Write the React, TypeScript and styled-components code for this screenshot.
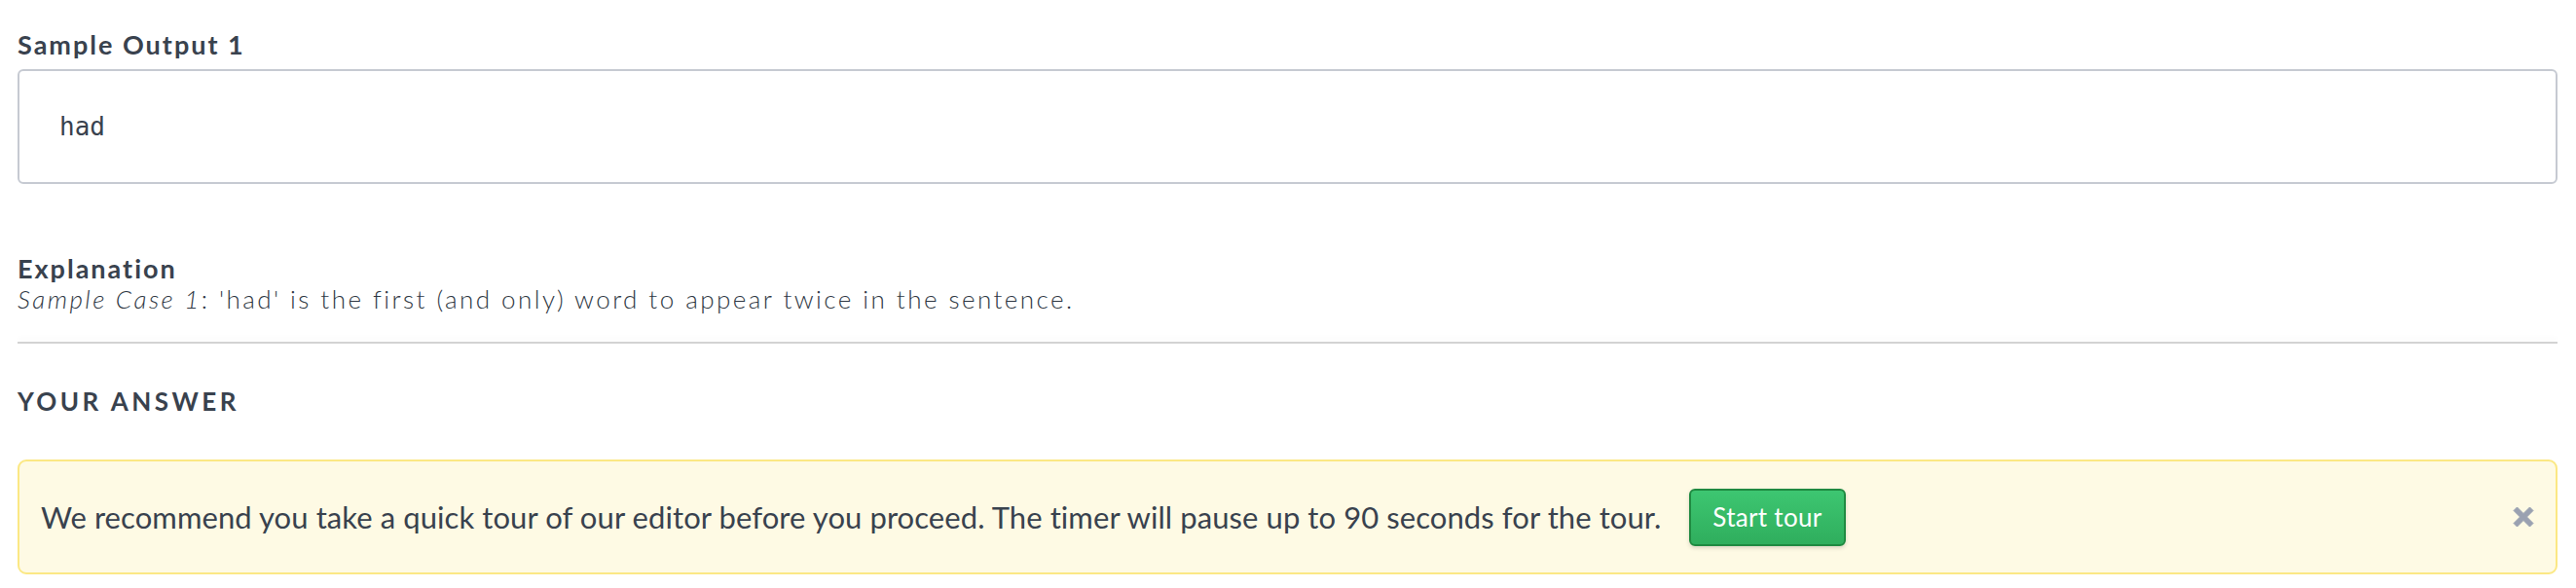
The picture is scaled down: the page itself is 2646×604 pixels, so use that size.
import React from "react";
import styled, { createGlobalStyle } from "styled-components";

const GlobalStyle = createGlobalStyle`
  html, body {
    margin: 0;
    padding: 0;
    background: #ffffff;
  }
  body {
    font-family: Lato, "Open Sans", "Liberation Sans", sans-serif;
    color: #39424e;
  }
`;

const Page = styled.div`
  padding: 30px 19px 0 18px;
  display: flex;
  flex-direction: column;
`;

const SectionTitle = styled.div<{ $mb?: number }>`
  font-size: 27px;
  line-height: 32px;
  font-weight: 700;
  letter-spacing: 2px;
  color: #39424e;
  margin-bottom: ${(p) => p.$mb ?? 0}px;
`;

const OutputBox = styled.div`
  box-sizing: border-box;
  height: 118px;
  border: 2px solid #c6cad2;
  border-radius: 6px;
  padding: 42px 40px 0 41px;
`;

const Mono = styled.pre`
  margin: 0;
  font-family: "DejaVu Sans Mono", "Liberation Mono", monospace;
  font-size: 26px;
  line-height: 30px;
  color: #39424e;
`;

const Explanation = styled.div`
  margin-top: 71px;
  display: flex;
  flex-direction: column;
`;

const ExplanationText = styled.p`
  margin: 0;
  font-size: 26px;
  line-height: 30px;
  font-weight: 300;
  letter-spacing: 2.45px;
  color: #2f3844;

  em {
    font-style: italic;
  }
`;

const Divider = styled.hr`
  margin: 29px 0 0 0;
  border: none;
  height: 2px;
  background: #d3d3d3;
  box-shadow: 0 -4px 5px rgba(0, 0, 0, 0.03);
`;

const AnswerTitle = styled.div`
  margin-top: 44px;
  font-size: 26px;
  line-height: 30px;
  font-weight: 700;
  letter-spacing: 3.5px;
  text-transform: uppercase;
  color: #39424e;
`;

const Alert = styled.div`
  margin-top: 45px;
  box-sizing: border-box;
  height: 118px;
  display: flex;
  align-items: center;
  padding: 0 22px 0 22px;
  background: #fefae4;
  border: 2px solid #fbe884;
  border-radius: 9px;
`;

const AlertText = styled.span`
  font-size: 31px;
  line-height: 36px;
  letter-spacing: 0.08px;
  color: #39424e;
`;

const TourButton = styled.button`
  margin-left: 29px;
  box-sizing: border-box;
  height: 59px;
  padding: 0 22px;
  font-family: Lato, "Open Sans", "Liberation Sans", sans-serif;
  font-size: 26px;
  letter-spacing: 0.3px;
  color: #ffffff;
  background: linear-gradient(#3dc671, #2fae5d);
  border: 2px solid #1f8a41;
  border-radius: 6px;
  box-shadow: 0 2px 4px rgba(0, 0, 0, 0.15);
  cursor: pointer;
`;

const CloseButton = styled.button`
  margin-left: auto;
  margin-right: 0;
  padding: 0;
  border: none;
  background: transparent;
  display: flex;
  align-items: center;
  justify-content: center;
  cursor: pointer;
`;

const CloseIcon = () => (
  <svg width="22" height="22" viewBox="0 0 22 22" aria-hidden="true">
    <path
      d="M4.5 1 L11 7.5 L17.5 1 L21 4.5 L14.5 11 L21 17.5 L17.5 21 L11 14.5 L4.5 21 L1 17.5 L7.5 11 L1 4.5 Z"
      fill="#9aa1b1"
      stroke="#9aa1b1"
      strokeWidth="1"
      strokeLinejoin="round"
    />
  </svg>
);

export default function App() {
  return (
    <>
      <GlobalStyle />
      <Page>
        <SectionTitle $mb={9}>Sample Output 1</SectionTitle>
        <OutputBox>
          <Mono>had</Mono>
        </OutputBox>
        <Explanation>
          <SectionTitle>Explanation</SectionTitle>
          <ExplanationText>
            <em>Sample Case 1</em>: 'had' is the first (and only) word to appear twice in the sentence.
          </ExplanationText>
        </Explanation>
        <Divider />
        <AnswerTitle>Your Answer</AnswerTitle>
        <Alert>
          <AlertText>
            We recommend you take a quick tour of our editor before you proceed. The timer will pause up to 90 seconds for the tour.
          </AlertText>
          <TourButton>Start tour</TourButton>
          <CloseButton aria-label="Close">
            <CloseIcon />
          </CloseButton>
        </Alert>
      </Page>
    </>
  );
}
